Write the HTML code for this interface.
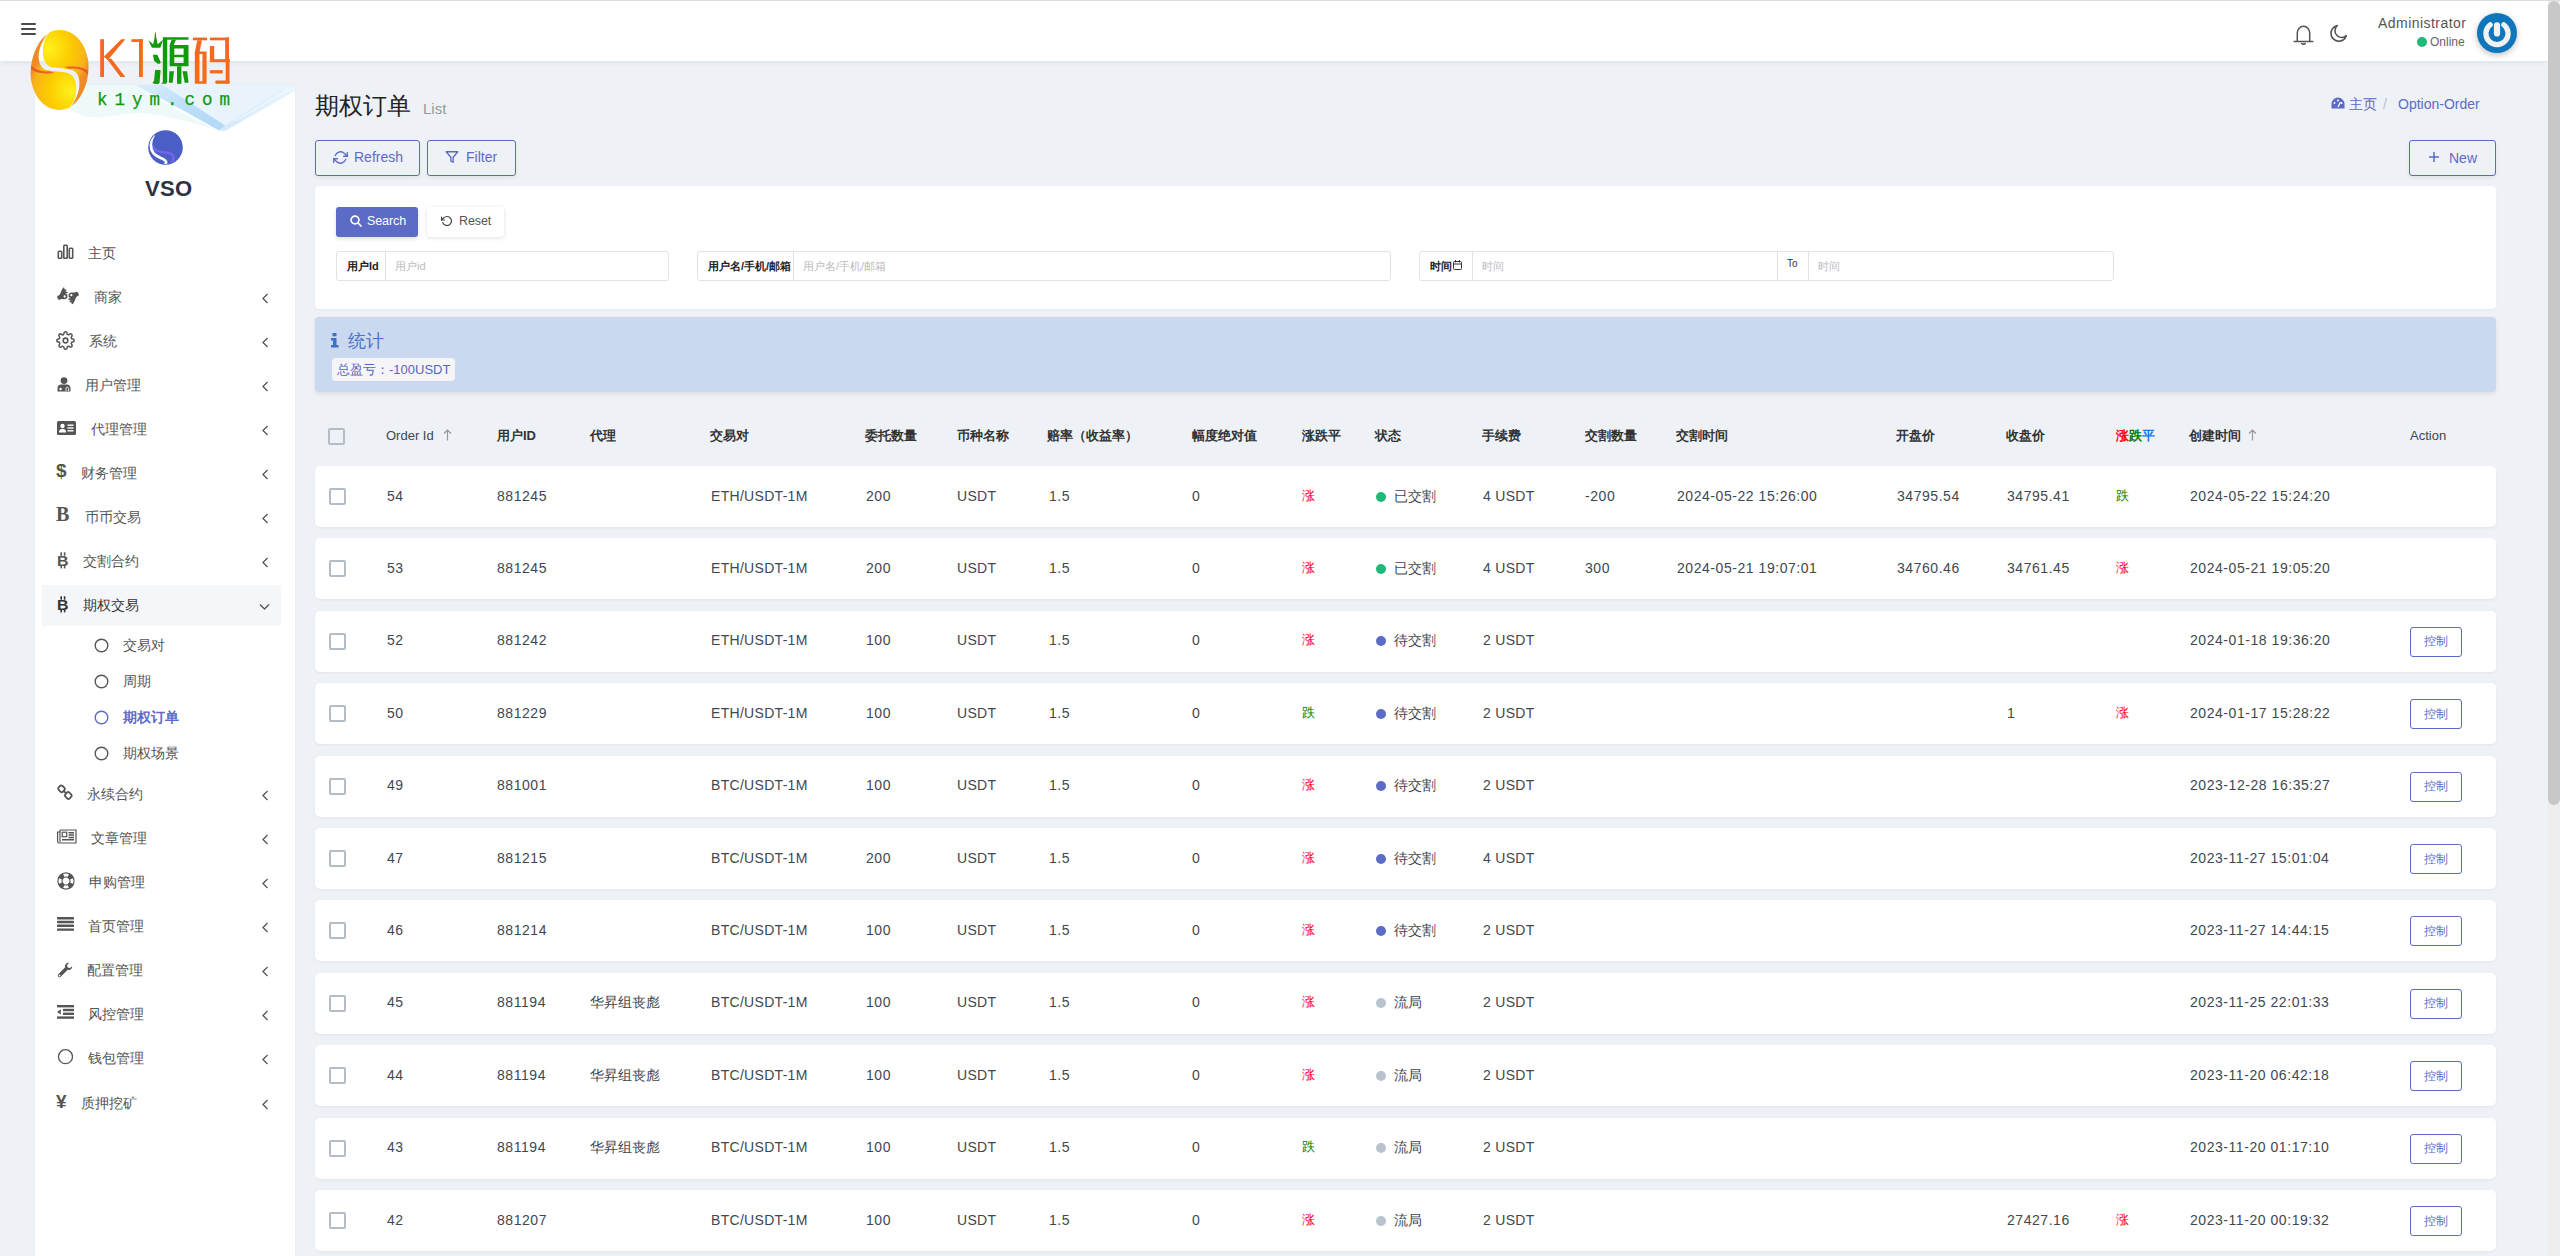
<!DOCTYPE html><html><head><meta charset="utf-8"><style>
html,body{margin:0;padding:0;}
body{width:2560px;height:1256px;overflow:hidden;position:relative;background:#eef1f6;font-family:"Liberation Sans",sans-serif;color:#414750;}
svg{display:block}
</style></head><body>
<div style="position:absolute;left:0px;top:0px;width:2548px;height:61px;background:#fff;box-shadow:0 2px 6px rgba(0,0,0,.06);"></div>
<div style="position:absolute;left:0px;top:0px;width:2560px;height:1px;background:#dcdedc;"></div>
<div style="position:absolute;left:21px;top:23px;width:14.5px;height:2px;background:#4a4a4a;border-radius:1px;"></div>
<div style="position:absolute;left:21px;top:28px;width:14.5px;height:2px;background:#4a4a4a;border-radius:1px;"></div>
<div style="position:absolute;left:21px;top:33px;width:14.5px;height:2px;background:#4a4a4a;border-radius:1px;"></div>
<svg style="position:absolute;left:2293px;top:23px" width="21" height="22" viewBox="0 0 21 22" fill="none" stroke="#555" stroke-width="1.5" stroke-linecap="round" stroke-linejoin="round"><path d="M4.3 18.3 V10 A6.2 6.7 0 0 1 16.7 10 V18.3"/><path d="M1.2 18.5 H19.8"/><path d="M8.8 20.5 L10.5 21.5 L12.2 20.5"/></svg>
<svg style="position:absolute;left:2328px;top:23px" width="21" height="21" viewBox="0 0 24 24" fill="none" stroke="#555" stroke-width="1.8" stroke-linecap="round" stroke-linejoin="round"><path d="M21 14.5A9 9 0 1 1 10.5 3a7 7 0 0 0 10.5 11.5z"/></svg>
<div style="position:absolute;left:2378px;top:3.00px;height:40px;line-height:40px;font-size:14px;color:#555;font-weight:normal;letter-spacing:0.45px;white-space:nowrap;">Administrator</div>
<div style="position:absolute;left:2417px;top:36.5px;width:10px;height:10px;background:#21b978;border-radius:50%;"></div>
<div style="position:absolute;left:2430px;top:21.50px;height:40px;line-height:40px;font-size:12px;color:#666;font-weight:normal;letter-spacing:0px;white-space:nowrap;">Online</div>
<div style="position:absolute;left:2477px;top:12.5px;width:40px;height:40px;border-radius:50%;background:#0f76bc;box-shadow:0 2px 6px rgba(0,0,0,.25);"></div>
<svg style="position:absolute;left:2477px;top:12.5px" width="40" height="40" viewBox="0 0 40 40"><path d="M13.2 11.8 A11.1 11.1 0 1 0 26.8 11.8" fill="none" stroke="#f2f2f2" stroke-width="5.2" stroke-linecap="round"/><path d="M20 12.3 V20.5" stroke="#f2f2f2" stroke-width="6.2" stroke-linecap="round"/></svg>
<div style="position:absolute;left:2548px;top:1px;width:12px;height:1255px;background:#eeeeee;"></div>
<div style="position:absolute;left:2548px;top:1px;width:12px;height:804px;background:#c8c8c8;border-radius:6px;"></div>
<div style="position:absolute;left:35px;top:85px;width:260px;height:1171px;background:#fff;box-shadow:0 0 3px rgba(0,0,0,.04);"></div>
<svg style="position:absolute;left:147px;top:129px" width="37" height="37" viewBox="0 0 37 37">
<defs><clipPath id="vc"><circle cx="18.5" cy="18.5" r="16.4"/></clipPath></defs><circle cx="18.5" cy="18.5" r="17.3" fill="#4b5ec5"/><g clip-path="url(#vc)">
<path d="M5.6 17.5 C7.5 21.5 11 22.8 17 23.2 C23 23.6 26.8 25.5 26.6 29 C26.5 31 25.6 32.5 24.6 33.6" fill="none" stroke="#7565ee" stroke-width="2.6" stroke-linecap="round"/>
<path d="M6.4 6.8 C3.2 11.5 2.8 19 6.2 23.8 C9.2 28 14 28.7 17 30.6 C19.4 32.1 19.6 34 18.2 35.6" fill="none" stroke="#fff" stroke-width="2.8" stroke-linecap="round"/></g>
</svg>
<div style="position:absolute;left:145px;top:169.00px;height:40px;line-height:40px;font-size:22px;color:#2b3240;font-weight:bold;letter-spacing:0.3px;white-space:nowrap;">VSO</div>
<svg style="position:absolute;left:57px;top:244px" width="17" height="16" viewBox="0 0 17 16" fill="none" stroke="#555" stroke-width="1.6"><rect x="1.3" y="7.3" width="3.4" height="7" rx=".8"/><rect x="6.8" y="1.3" width="3.4" height="13" rx=".8"/><rect x="12.3" y="4.3" width="3.4" height="10" rx=".8"/></svg>
<div style="position:absolute;left:88px;top:233.00px;height:40px;line-height:40px;font-size:14px;color:#555;font-weight:normal;letter-spacing:0px;white-space:nowrap;">主页</div>
<svg style="position:absolute;left:54px;top:284px" width="28" height="24" viewBox="0 0 1465 1256"><path fill="#555" fill-rule="evenodd" d="M170 640 L300 560 L400 330 L480 180 L550 200 L540 270 L640 290 L660 340 L580 380 L700 420 L720 470 L600 500 L700 560 L700 720 L620 780 L520 800 L380 790 L300 830 L220 810 L170 700z M500 655 a60 60 0 1 0 120 0 a60 60 0 1 0 -120 0z M1296 600 L1166 680 L1066 910 L986 1060 L916 1040 L926 970 L826 950 L806 900 L886 860 L766 820 L746 770 L866 740 L766 680 L766 520 L846 460 L946 440 L1086 450 L1166 410 L1246 430 L1296 540z M846 585 a60 60 0 1 0 120 0 a60 60 0 1 0 -120 0z"/></svg>
<div style="position:absolute;left:94px;top:277.00px;height:40px;line-height:40px;font-size:14px;color:#555;font-weight:normal;letter-spacing:0px;white-space:nowrap;">商家</div>
<svg style="position:absolute;left:261px;top:293px" width="8" height="11" viewBox="0 0 8 11" fill="none" stroke="#555" stroke-width="1.3"><path d="M6.5 1 L2 5.5 L6.5 10"/></svg>
<svg style="position:absolute;left:56px;top:330.5px" width="19" height="19" viewBox="0 0 24 24" fill="none" stroke="#555" stroke-width="1.9" stroke-linejoin="round"><circle cx="12" cy="12" r="3"/><path d="M19.4 15a1.65 1.65 0 0 0 .33 1.82l.06.06a2 2 0 1 1-2.83 2.83l-.06-.06a1.65 1.65 0 0 0-1.82-.33 1.65 1.65 0 0 0-1 1.51V21a2 2 0 1 1-4 0v-.09A1.65 1.65 0 0 0 9 19.4a1.65 1.65 0 0 0-1.82.33l-.06.06a2 2 0 1 1-2.83-2.83l.06-.06A1.65 1.65 0 0 0 4.68 15a1.65 1.65 0 0 0-1.51-1H3a2 2 0 1 1 0-4h.09A1.65 1.65 0 0 0 4.6 9a1.65 1.65 0 0 0-.33-1.82l-.06-.06a2 2 0 1 1 2.83-2.83l.06.06A1.65 1.65 0 0 0 9 4.68a1.65 1.65 0 0 0 1-1.51V3a2 2 0 1 1 4 0v.09a1.65 1.65 0 0 0 1 1.51 1.65 1.65 0 0 0 1.82-.33l.06-.06a2 2 0 1 1 2.83 2.83l-.06.06A1.65 1.65 0 0 0 19.4 9a1.65 1.65 0 0 0 1.51 1H21a2 2 0 1 1 0 4h-.09a1.65 1.65 0 0 0-1.51 1z"/></svg>
<div style="position:absolute;left:89px;top:321.00px;height:40px;line-height:40px;font-size:14px;color:#555;font-weight:normal;letter-spacing:0px;white-space:nowrap;">系统</div>
<svg style="position:absolute;left:261px;top:337px" width="8" height="11" viewBox="0 0 8 11" fill="none" stroke="#555" stroke-width="1.3"><path d="M6.5 1 L2 5.5 L6.5 10"/></svg>
<svg style="position:absolute;left:57px;top:376.5px" width="14" height="15" viewBox="0 0 14 15"><circle cx="7" cy="3.6" r="3.4" fill="#555"/><path d="M0.5 14.5 V11 C0.5 8.5 2.5 7.5 4 7.5 L10 7.5 C11.5 7.5 13.5 8.5 13.5 11 V14.5z" fill="#555"/><circle cx="3.6" cy="12" r="1.2" fill="#fff"/><path d="M9 14 v-2.5 a1.3 1.3 0 0 1 2.6 0 v2.5" fill="none" stroke="#fff" stroke-width=".9"/></svg>
<div style="position:absolute;left:85px;top:365.00px;height:40px;line-height:40px;font-size:14px;color:#555;font-weight:normal;letter-spacing:0px;white-space:nowrap;">用户管理</div>
<svg style="position:absolute;left:261px;top:381px" width="8" height="11" viewBox="0 0 8 11" fill="none" stroke="#555" stroke-width="1.3"><path d="M6.5 1 L2 5.5 L6.5 10"/></svg>
<svg style="position:absolute;left:57px;top:420.5px" width="19" height="14" viewBox="0 0 19 14"><rect x="0" y="0" width="19" height="14" rx="1.5" fill="#555"/><circle cx="5.5" cy="5" r="2.2" fill="#fff"/><path d="M2 11.5 C2 8.5 3.5 8 5.5 8 C7.5 8 9 8.5 9 11.5z" fill="#fff"/><rect x="10.5" y="3.5" width="6" height="1.4" fill="#fff"/><rect x="10.5" y="6.3" width="6" height="1.4" fill="#fff"/><rect x="10.5" y="9.1" width="6" height="1.4" fill="#fff"/></svg>
<div style="position:absolute;left:91px;top:409.00px;height:40px;line-height:40px;font-size:14px;color:#555;font-weight:normal;letter-spacing:0px;white-space:nowrap;">代理管理</div>
<svg style="position:absolute;left:261px;top:425px" width="8" height="11" viewBox="0 0 8 11" fill="none" stroke="#555" stroke-width="1.3"><path d="M6.5 1 L2 5.5 L6.5 10"/></svg>
<div style="position:absolute;left:56px;top:460px;height:22px;line-height:22px;font-size:19px;font-weight:bold;color:#555;">$</div>
<div style="position:absolute;left:81px;top:453.00px;height:40px;line-height:40px;font-size:14px;color:#555;font-weight:normal;letter-spacing:0px;white-space:nowrap;">财务管理</div>
<svg style="position:absolute;left:261px;top:469px" width="8" height="11" viewBox="0 0 8 11" fill="none" stroke="#555" stroke-width="1.3"><path d="M6.5 1 L2 5.5 L6.5 10"/></svg>
<div style="position:absolute;left:56px;top:503px;height:22px;line-height:22px;font-family:'Liberation Serif',serif;font-weight:bold;font-size:20px;color:#555;">B</div>
<div style="position:absolute;left:85px;top:497.00px;height:40px;line-height:40px;font-size:14px;color:#555;font-weight:normal;letter-spacing:0px;white-space:nowrap;">币币交易</div>
<svg style="position:absolute;left:261px;top:513px" width="8" height="11" viewBox="0 0 8 11" fill="none" stroke="#555" stroke-width="1.3"><path d="M6.5 1 L2 5.5 L6.5 10"/></svg>
<svg style="position:absolute;left:57px;top:552px" width="13" height="17" viewBox="0 0 13 17"><text x="0" y="13.9" font-family="Liberation Sans" font-weight="bold" font-size="15" fill="#555" textLength="11.5" lengthAdjust="spacingAndGlyphs">B</text><rect x="3.4" y="0.3" width="1.6" height="3.4" fill="#555"/><rect x="6.8" y="0.3" width="1.6" height="3.4" fill="#555"/><rect x="3.4" y="13" width="1.6" height="3.4" fill="#555"/><rect x="6.8" y="13" width="1.6" height="3.4" fill="#555"/></svg>
<div style="position:absolute;left:83px;top:541.00px;height:40px;line-height:40px;font-size:14px;color:#555;font-weight:normal;letter-spacing:0px;white-space:nowrap;">交割合约</div>
<svg style="position:absolute;left:261px;top:557px" width="8" height="11" viewBox="0 0 8 11" fill="none" stroke="#555" stroke-width="1.3"><path d="M6.5 1 L2 5.5 L6.5 10"/></svg>
<div style="position:absolute;left:42px;top:585px;width:239px;height:41px;background:#f5f6f9;border-radius:1px;"></div>
<svg style="position:absolute;left:57px;top:596px" width="13" height="17" viewBox="0 0 13 17"><text x="0" y="13.9" font-family="Liberation Sans" font-weight="bold" font-size="15" fill="#333" textLength="11.5" lengthAdjust="spacingAndGlyphs">B</text><rect x="3.4" y="0.3" width="1.6" height="3.4" fill="#333"/><rect x="6.8" y="0.3" width="1.6" height="3.4" fill="#333"/><rect x="3.4" y="13" width="1.6" height="3.4" fill="#333"/><rect x="6.8" y="13" width="1.6" height="3.4" fill="#333"/></svg>
<div style="position:absolute;left:83px;top:585.00px;height:40px;line-height:40px;font-size:14px;color:#333;font-weight:normal;letter-spacing:0px;white-space:nowrap;">期权交易</div>
<svg style="position:absolute;left:259px;top:603px" width="11" height="8" viewBox="0 0 11 8" fill="none" stroke="#555" stroke-width="1.3"><path d="M1 1.5 L5.5 6 L10 1.5"/></svg>
<svg style="position:absolute;left:56px;top:783px" width="18" height="18" viewBox="0 0 18 18" fill="none" stroke="#555" stroke-width="1.8"><rect x="2.5" y="3.05" width="6" height="5.5" rx="1.8" transform="rotate(45 5.5 5.8)"/><rect x="9.3" y="9.75" width="6" height="5.5" rx="1.8" transform="rotate(45 12.3 12.5)"/><path d="M7.3 7.6 L10.5 10.7"/></svg>
<div style="position:absolute;left:87px;top:774.00px;height:40px;line-height:40px;font-size:14px;color:#555;font-weight:normal;letter-spacing:0px;white-space:nowrap;">永续合约</div>
<svg style="position:absolute;left:261px;top:790px" width="8" height="11" viewBox="0 0 8 11" fill="none" stroke="#555" stroke-width="1.3"><path d="M6.5 1 L2 5.5 L6.5 10"/></svg>
<svg style="position:absolute;left:57px;top:829px" width="20" height="15" viewBox="0 0 20 15" fill="none" stroke="#555" stroke-width="1.2"><path d="M3 1 H19 V14 H2 C1.2 14 0.6 13.4 0.6 12.6 V3 H3"/><path d="M3 1 V13"/><rect x="5.2" y="3.2" width="4.5" height="4.5"/><path d="M11.5 3.8h5.5M11.5 6h5.5M11.5 8.5h5.5M5 10.8h12" stroke-width="1.4"/></svg>
<div style="position:absolute;left:91px;top:818.00px;height:40px;line-height:40px;font-size:14px;color:#555;font-weight:normal;letter-spacing:0px;white-space:nowrap;">文章管理</div>
<svg style="position:absolute;left:261px;top:834px" width="8" height="11" viewBox="0 0 8 11" fill="none" stroke="#555" stroke-width="1.3"><path d="M6.5 1 L2 5.5 L6.5 10"/></svg>
<svg style="position:absolute;left:56.6px;top:871.8px" width="18" height="18" viewBox="0 0 18 18"><circle cx="9" cy="9" r="8.1" fill="none" stroke="#555" stroke-width="1.1"/><circle cx="9" cy="9" r="4.0" fill="none" stroke="#555" stroke-width="1.1"/><path fill="#555" d="M17.07 12.26 A8.7 8.7 0 0 1 12.26 17.07 L10.35 12.34 A3.6 3.6 0 0 0 12.34 10.35z M5.74 17.07 A8.7 8.7 0 0 1 0.93 12.26 L5.66 10.35 A3.6 3.6 0 0 0 7.65 12.34z M0.93 5.74 A8.7 8.7 0 0 1 5.74 0.93 L7.65 5.66 A3.6 3.6 0 0 0 5.66 7.65z M12.26 0.93 A8.7 8.7 0 0 1 17.07 5.74 L12.34 7.65 A3.6 3.6 0 0 0 10.35 5.66z"/></svg>
<div style="position:absolute;left:89px;top:862.00px;height:40px;line-height:40px;font-size:14px;color:#555;font-weight:normal;letter-spacing:0px;white-space:nowrap;">申购管理</div>
<svg style="position:absolute;left:261px;top:878px" width="8" height="11" viewBox="0 0 8 11" fill="none" stroke="#555" stroke-width="1.3"><path d="M6.5 1 L2 5.5 L6.5 10"/></svg>
<svg style="position:absolute;left:57px;top:917.4px" width="17" height="14" viewBox="0 0 17 14" fill="#555"><rect x="0" y="0" width="17" height="2.4" rx=".6"/><rect x="0" y="3.8" width="17" height="2.4" rx=".6"/><rect x="0" y="7.6" width="17" height="2.4" rx=".6"/><rect x="0" y="11.4" width="17" height="2.4" rx=".6"/></svg>
<div style="position:absolute;left:88px;top:906.00px;height:40px;line-height:40px;font-size:14px;color:#555;font-weight:normal;letter-spacing:0px;white-space:nowrap;">首页管理</div>
<svg style="position:absolute;left:261px;top:922px" width="8" height="11" viewBox="0 0 8 11" fill="none" stroke="#555" stroke-width="1.3"><path d="M6.5 1 L2 5.5 L6.5 10"/></svg>
<svg style="position:absolute;left:57px;top:962px" width="16" height="16" viewBox="0 0 16 16"><path d="M11.5 0.8 C9 0.8 7.5 3 8.2 5.3 L1.2 12.3 C0.4 13.1 0.6 14.2 1.3 14.8 C2 15.5 3 15.5 3.7 14.8 L10.7 7.8 C13 8.5 15.3 7 15.2 4.3 L13 6.1 L10.6 5.4 L10 3 L12 0.9z" fill="#555"/><circle cx="2.5" cy="13.5" r=".9" fill="#fff"/></svg>
<div style="position:absolute;left:87px;top:950.00px;height:40px;line-height:40px;font-size:14px;color:#555;font-weight:normal;letter-spacing:0px;white-space:nowrap;">配置管理</div>
<svg style="position:absolute;left:261px;top:966px" width="8" height="11" viewBox="0 0 8 11" fill="none" stroke="#555" stroke-width="1.3"><path d="M6.5 1 L2 5.5 L6.5 10"/></svg>
<svg style="position:absolute;left:57px;top:1005.4px" width="17" height="14" viewBox="0 0 17 14" fill="#555"><rect x="0" y="0" width="17" height="2.4"/><rect x="6" y="3.8" width="11" height="2.4"/><rect x="6" y="7.6" width="11" height="2.4"/><rect x="0" y="11.4" width="17" height="2.4"/><path d="M0 6.9 L3.8 4.2 V9.6z"/></svg>
<div style="position:absolute;left:88px;top:994.00px;height:40px;line-height:40px;font-size:14px;color:#555;font-weight:normal;letter-spacing:0px;white-space:nowrap;">风控管理</div>
<svg style="position:absolute;left:261px;top:1010px" width="8" height="11" viewBox="0 0 8 11" fill="none" stroke="#555" stroke-width="1.3"><path d="M6.5 1 L2 5.5 L6.5 10"/></svg>
<svg style="position:absolute;left:57px;top:1049px" width="16" height="16" viewBox="0 0 16 16"><circle cx="8.5" cy="7.7" r="7" fill="none" stroke="#555" stroke-width="1.3"/></svg>
<div style="position:absolute;left:88px;top:1038.00px;height:40px;line-height:40px;font-size:14px;color:#555;font-weight:normal;letter-spacing:0px;white-space:nowrap;">钱包管理</div>
<svg style="position:absolute;left:261px;top:1054px" width="8" height="11" viewBox="0 0 8 11" fill="none" stroke="#555" stroke-width="1.3"><path d="M6.5 1 L2 5.5 L6.5 10"/></svg>
<div style="position:absolute;left:56px;top:1090.5px;height:22px;line-height:22px;font-size:19px;font-weight:bold;color:#555;">¥</div>
<div style="position:absolute;left:81px;top:1083.00px;height:40px;line-height:40px;font-size:14px;color:#555;font-weight:normal;letter-spacing:0px;white-space:nowrap;">质押挖矿</div>
<svg style="position:absolute;left:261px;top:1099px" width="8" height="11" viewBox="0 0 8 11" fill="none" stroke="#555" stroke-width="1.3"><path d="M6.5 1 L2 5.5 L6.5 10"/></svg>
<svg style="position:absolute;left:94px;top:637.5px" width="15" height="15" viewBox="0 0 15 15"><circle cx="7.5" cy="7.5" r="6.3" fill="none" stroke="#555" stroke-width="1.4"/></svg>
<div style="position:absolute;left:123px;top:625.00px;height:40px;line-height:40px;font-size:14px;color:#555;font-weight:normal;letter-spacing:0px;white-space:nowrap;">交易对</div>
<svg style="position:absolute;left:94px;top:673.5px" width="15" height="15" viewBox="0 0 15 15"><circle cx="7.5" cy="7.5" r="6.3" fill="none" stroke="#555" stroke-width="1.4"/></svg>
<div style="position:absolute;left:123px;top:661.00px;height:40px;line-height:40px;font-size:14px;color:#555;font-weight:normal;letter-spacing:0px;white-space:nowrap;">周期</div>
<svg style="position:absolute;left:94px;top:709.5px" width="15" height="15" viewBox="0 0 15 15"><circle cx="7.5" cy="7.5" r="6.3" fill="none" stroke="#5c6bc6" stroke-width="1.4"/></svg>
<div style="position:absolute;left:123px;top:697.00px;height:40px;line-height:40px;font-size:14px;color:#5c6bc6;font-weight:bold;letter-spacing:0px;white-space:nowrap;">期权订单</div>
<svg style="position:absolute;left:94px;top:745.5px" width="15" height="15" viewBox="0 0 15 15"><circle cx="7.5" cy="7.5" r="6.3" fill="none" stroke="#555" stroke-width="1.4"/></svg>
<div style="position:absolute;left:123px;top:733.00px;height:40px;line-height:40px;font-size:14px;color:#555;font-weight:normal;letter-spacing:0px;white-space:nowrap;">期权场景</div>
<svg style="position:absolute;left:35px;top:85px" width="260" height="50" viewBox="0 0 260 50">
<defs><filter id="bl" x="-10%" y="-10%" width="120%" height="120%"><feGaussianBlur stdDeviation="0.7"/></filter>
<linearGradient id="wl" x1="0" y1="0" x2="1" y2="0.6"><stop offset="0" stop-color="#d6ebfb"/><stop offset="0.55" stop-color="#b3dbf8"/><stop offset="1" stop-color="#a6d3f6"/></linearGradient>
<linearGradient id="wr" x1="0" y1="1" x2="1" y2="0"><stop offset="0" stop-color="#cfe6fa"/><stop offset="1" stop-color="#e9f5fd"/></linearGradient></defs>
<g filter="url(#bl)">
<path d="M30 0 H102 C130 18 160 36 183 45 C150 36 125 28 100 28 C80 30 65 34 55 32 C45 30 35 26 30 20z" fill="#e8f7f8" opacity="0.75"/>
<path d="M128 0 H255 L191 41z" fill="#e5f2fc" opacity="0.9"/>
<path d="M100 0 H128 L191 41 L184 45.5 C160 32 128 14 100 0z" fill="url(#wl)" opacity="0.85"/>
<path d="M183 45.5 L190 46 L260 6 V0 H252z" fill="url(#wr)" opacity="0.9"/>
<path d="M200 36 C225 22 240 12 258 3" stroke="#ffffff" stroke-width="0.8" fill="none" opacity="0.8"/>
</g>
</svg>
<svg style="position:absolute;left:25px;top:25px" width="70" height="90" viewBox="0 0 977 1256">
<defs>
<radialGradient id="ga" cx="330" cy="330" r="620" gradientUnits="userSpaceOnUse"><stop offset="0" stop-color="#fff21c"/><stop offset="0.5" stop-color="#fccc00"/><stop offset="0.85" stop-color="#f7b21c"/><stop offset="1" stop-color="#f08a24"/></radialGradient>
<radialGradient id="gb" cx="640" cy="920" r="620" gradientUnits="userSpaceOnUse"><stop offset="0" stop-color="#fff21c"/><stop offset="0.5" stop-color="#fccc00"/><stop offset="0.85" stop-color="#f7b21c"/><stop offset="1" stop-color="#f08a24"/></radialGradient>
</defs>
<path d="M340 104 C400 75 460 68 520 72 C700 90 840 250 880 480 C900 620 880 800 800 950 C760 1030 710 1090 650 1130 C720 1030 765 910 760 800 C755 700 715 640 640 625 C560 610 470 600 380 590 C300 570 255 500 250 400 C245 290 270 180 340 104z" fill="url(#ga)"/>
<path d="M626 1152 C566 1181 506 1188 446 1184 C266 1166 126 1006 86 776 C66 636 86 456 166 306 C206 226 256 166 316 126 C236 226 186 346 191 456 C196 556 246 621 326 636 C406 646 496 656 586 666 C666 686 711 756 716 856 C721 966 696 1076 626 1152z" fill="url(#gb)"/>
<path d="M560 585 C680 570 820 585 875 640 L880 690 C820 620 700 600 620 612z" fill="#e6412a" opacity="0.75"/>
<path d="M406 671 C286 686 146 671 91 616 L86 566 C146 636 266 656 346 644z" fill="#e6412a" opacity="0.75"/>
</svg>
<svg style="position:absolute;left:95px;top:28px" width="140" height="60" viewBox="0 0 2560 1097">
<g fill="#f36a1f">
<rect x="95" y="205" width="70" height="690"/>
<path d="M160 525 L480 205 L555 205 L235 585z"/>
<path d="M215 560 L300 560 L555 895 L465 895z"/>
<rect x="665" y="205" width="210" height="50"/>
<rect x="805" y="205" width="70" height="690"/>
<rect x="1790" y="175" width="260" height="50"/>
<path d="M1870 225 L1955 225 L1912 440 L1826 440z"/>
<path d="M1825 430 H2040 V1020 H1825z M1910 475 V975 H1965 V475z" fill-rule="evenodd"/>
<rect x="2100" y="175" width="350" height="50"/>
<rect x="2380" y="175" width="70" height="420"/>
<rect x="2100" y="330" width="80" height="260"/>
<rect x="2100" y="570" width="365" height="55"/>
<rect x="2390" y="570" width="70" height="440"/>
<rect x="2200" y="960" width="260" height="60" rx="20"/>
<rect x="2100" y="770" width="235" height="60"/>
</g>
<g fill="#129a0e">
<path d="M975 225 L1065 295 L1090 170 L1098 80 L1112 80 L1120 170 L1145 295 L1245 215 L1195 360 L1040 360z"/>
<path d="M1060 490 L1140 490 L1200 620 C1200 660 1160 660 1140 650 L1080 600z"/>
<path d="M1100 770 L1200 770 L1180 1000 C1180 1030 1100 1030 1050 1010 L1080 960z"/>
<path d="M1240 170 H1710 V215 H1320 V990 L1300 1020 H1210 L1240 990z"/>
<path d="M1365 310 H1710 V700 H1365z M1450 375 V490 H1620 V375z M1450 535 V640 H1620 V535z" fill-rule="evenodd"/>
<path d="M1400 215 L1480 215 L1440 310 L1365 310z"/>
<rect x="1500" y="700" width="80" height="320"/>
<path d="M1360 790 H1445 L1420 1000 H1350z"/>
<path d="M1600 790 H1685 L1710 1000 H1640z"/>
</g>
</svg>
<svg style="position:absolute;left:97px;top:88px" width="140" height="24" viewBox="0 0 140 24">
<text x="0" y="16.8" font-family="Liberation Mono" font-size="17.5" fill="#129a0e" stroke="#129a0e" stroke-width="0.25" letter-spacing="7.0">k1ym.com</text>
</svg>
<div style="position:absolute;left:315px;top:85.50px;height:40px;line-height:40px;font-size:24px;color:#222;font-weight:normal;letter-spacing:0px;white-space:nowrap;">期权订单</div>
<div style="position:absolute;left:423px;top:89.00px;height:40px;line-height:40px;font-size:15px;color:#999;font-weight:normal;letter-spacing:0px;white-space:nowrap;">List</div>
<svg style="position:absolute;left:2331px;top:97px" width="14" height="12" viewBox="0 0 14 12"><path d="M7 0.5 A6.5 6.5 0 0 0 0.5 7 V11.5 H13.5 V7 A6.5 6.5 0 0 0 7 0.5z" fill="#5c6bc6"/><circle cx="3.5" cy="6" r="1" fill="#fff"/><circle cx="7" cy="3.5" r="1" fill="#fff"/><circle cx="10.5" cy="6" r="1" fill="#fff"/><path d="M7 10 L9.5 5" stroke="#fff" stroke-width="1.3"/></svg>
<div style="position:absolute;left:2349px;top:83.50px;height:40px;line-height:40px;font-size:14px;color:#5c6bc6;font-weight:normal;letter-spacing:0px;white-space:nowrap;">主页</div>
<div style="position:absolute;left:2383px;top:83.50px;height:40px;line-height:40px;font-size:14px;color:#b7c0cc;font-weight:normal;letter-spacing:0px;white-space:nowrap;">/</div>
<div style="position:absolute;left:2398px;top:83.50px;height:40px;line-height:40px;font-size:14px;color:#5c6bc6;font-weight:normal;letter-spacing:0px;white-space:nowrap;">Option-Order</div>
<div style="position:absolute;left:315px;top:140px;width:105px;height:36px;box-sizing:border-box;border:1px solid #5c6bc6;border-radius:3px;box-shadow:0 2px 4px rgba(0,0,0,.06);"></div>
<svg style="position:absolute;left:333px;top:149.5px" width="15" height="15" viewBox="0 0 24 24" fill="none" stroke="#5c6bc6" stroke-width="2.2" stroke-linecap="round" stroke-linejoin="round"><path d="M23 4v6h-6"/><path d="M1 20v-6h6"/><path d="M3.5 9a9 9 0 0 1 14.9-3.4L23 10M1 14l4.6 4.4A9 9 0 0 0 20.5 15"/></svg>
<div style="position:absolute;left:354px;top:137.00px;height:40px;line-height:40px;font-size:14px;color:#5c6bc6;font-weight:normal;letter-spacing:0px;white-space:nowrap;">Refresh</div>
<div style="position:absolute;left:427px;top:140px;width:89px;height:36px;box-sizing:border-box;border:1px solid #5c6bc6;border-radius:3px;box-shadow:0 2px 4px rgba(0,0,0,.06);"></div>
<svg style="position:absolute;left:445px;top:150px" width="14" height="14" viewBox="0 0 24 24" fill="none" stroke="#5c6bc6" stroke-width="2.3" stroke-linejoin="round"><path d="M22 3H2l8 9.5V19l4 2v-8.5z"/></svg>
<div style="position:absolute;left:466px;top:137.00px;height:40px;line-height:40px;font-size:14px;color:#5c6bc6;font-weight:normal;letter-spacing:0px;white-space:nowrap;">Filter</div>
<div style="position:absolute;left:2409px;top:140px;width:87px;height:36px;box-sizing:border-box;border:1px solid #5c6bc6;border-radius:3px;box-shadow:0 2px 4px rgba(0,0,0,.06);"></div>
<svg style="position:absolute;left:2429px;top:152px" width="10" height="10" viewBox="0 0 10 10" stroke="#5c6bc6" stroke-width="1.5"><path d="M5 0v10M0 5h10"/></svg>
<div style="position:absolute;left:2449px;top:137.50px;height:40px;line-height:40px;font-size:14px;color:#5c6bc6;font-weight:normal;letter-spacing:0px;white-space:nowrap;">New</div>
<div style="position:absolute;left:315px;top:186px;width:2181px;height:123px;background:#fff;border-radius:4px;box-shadow:0 1px 3px rgba(0,0,0,.03);"></div>
<div style="position:absolute;left:336px;top:207px;width:82px;height:30px;background:#5c6bc6;border-radius:3px;box-shadow:0 2px 4px rgba(0,0,0,.12);"></div>
<svg style="position:absolute;left:350px;top:215px" width="12" height="12" viewBox="0 0 12 12" fill="none" stroke="#fff" stroke-width="1.7"><circle cx="5" cy="5" r="3.9"/><path d="M8 8 L11 11" stroke-linecap="round"/></svg>
<div style="position:absolute;left:367px;top:201.00px;height:40px;line-height:40px;font-size:12.5px;color:#fff;font-weight:normal;letter-spacing:-0.1px;white-space:nowrap;">Search</div>
<div style="position:absolute;left:427px;top:207px;width:77px;height:30px;background:#fff;border-radius:3px;box-shadow:0 1px 4px rgba(0,0,0,.13);"></div>
<svg style="position:absolute;left:441px;top:215px" width="12" height="12" viewBox="0 0 24 24" fill="none" stroke="#444" stroke-width="2.4" stroke-linecap="round"><path d="M1 4v6h6"/><path d="M3.5 15a9 9 0 1 0 2.1-9.4L1 10"/></svg>
<div style="position:absolute;left:459px;top:201.00px;height:40px;line-height:40px;font-size:12.5px;color:#555;font-weight:normal;letter-spacing:-0.1px;white-space:nowrap;">Reset</div>
<div style="position:absolute;left:336px;top:251px;width:333px;height:30px;box-sizing:border-box;border:1px solid #dde4e8;border-radius:3px;background:#fff;"></div>
<div style="position:absolute;left:385px;top:251px;width:1px;height:30px;background:#dde4e8;"></div>
<div style="position:absolute;left:347px;top:246.00px;height:40px;line-height:40px;font-size:11px;color:#222;font-weight:bold;letter-spacing:0px;white-space:nowrap;">用户Id</div>
<div style="position:absolute;left:395px;top:246.00px;height:40px;line-height:40px;font-size:11px;color:#bbb;font-weight:normal;letter-spacing:0px;white-space:nowrap;">用户id</div>
<div style="position:absolute;left:697px;top:251px;width:694px;height:30px;box-sizing:border-box;border:1px solid #dde4e8;border-radius:3px;background:#fff;"></div>
<div style="position:absolute;left:793px;top:251px;width:1px;height:30px;background:#dde4e8;"></div>
<div style="position:absolute;left:708px;top:246.00px;height:40px;line-height:40px;font-size:11px;color:#222;font-weight:bold;letter-spacing:0px;white-space:nowrap;">用户名/手机/邮箱</div>
<div style="position:absolute;left:803px;top:246.00px;height:40px;line-height:40px;font-size:11px;color:#bbb;font-weight:normal;letter-spacing:0px;white-space:nowrap;">用户名/手机/邮箱</div>
<div style="position:absolute;left:1419px;top:251px;width:695px;height:30px;box-sizing:border-box;border:1px solid #dde4e8;border-radius:3px;background:#fff;"></div>
<div style="position:absolute;left:1472px;top:251px;width:1px;height:30px;background:#dde4e8;"></div>
<div style="position:absolute;left:1777px;top:251px;width:1px;height:30px;background:#dde4e8;"></div>
<div style="position:absolute;left:1808px;top:251px;width:1px;height:30px;background:#dde4e8;"></div>
<div style="position:absolute;left:1430px;top:246.00px;height:40px;line-height:40px;font-size:11px;color:#222;font-weight:bold;letter-spacing:0px;white-space:nowrap;">时间</div>
<svg style="position:absolute;left:1453px;top:260px" width="9" height="10" viewBox="0 0 9 10" fill="none" stroke="#333" stroke-width="1"><rect x=".5" y="1.5" width="8" height="8" rx="1"/><path d="M.5 4h8M2.5 0v2.5M6.5 0v2.5"/></svg>
<div style="position:absolute;left:1482px;top:246.00px;height:40px;line-height:40px;font-size:11px;color:#bbb;font-weight:normal;letter-spacing:0px;white-space:nowrap;">时间</div>
<div style="position:absolute;left:1787px;top:244.00px;height:40px;line-height:40px;font-size:10px;color:#333;font-weight:normal;letter-spacing:0px;white-space:nowrap;">To</div>
<div style="position:absolute;left:1818px;top:246.00px;height:40px;line-height:40px;font-size:11px;color:#bbb;font-weight:normal;letter-spacing:0px;white-space:nowrap;">时间</div>
<div style="position:absolute;left:315px;top:317px;width:2181px;height:75px;background:#cad9ef;border-radius:4px;box-shadow:0 2px 4px rgba(0,0,0,.08);"></div>
<svg style="position:absolute;left:331px;top:333px" width="8" height="15" viewBox="0 0 8 15" fill="#3f70c8"><rect x="1.5" y="0" width="4" height="3.3"/><path d="M0 5 H5.5 V12 H7.5 V14.5 H0 V12 H2 V7.5 H0z"/></svg>
<div style="position:absolute;left:348px;top:320.50px;height:40px;line-height:40px;font-size:18px;color:#4a72c9;font-weight:normal;letter-spacing:0px;white-space:nowrap;">统计</div>
<div style="position:absolute;left:332px;top:358px;width:123px;height:23px;background:#f5f5f8;border-radius:4px;"></div>
<div style="position:absolute;left:337px;top:349.50px;height:40px;line-height:40px;font-size:13px;color:#5566c0;font-weight:normal;letter-spacing:0px;white-space:nowrap;">总盈亏：-100USDT</div>
<div style="position:absolute;left:328px;top:428px;width:17px;height:17px;box-sizing:border-box;border:2px solid #b3bcc7;border-radius:2px;"></div>
<div style="position:absolute;left:386px;top:415.50px;height:40px;line-height:40px;font-size:13px;color:#414750;font-weight:normal;letter-spacing:0px;white-space:nowrap;">Order Id</div>
<div style="position:absolute;left:497px;top:415.50px;height:40px;line-height:40px;font-size:13px;color:#333;font-weight:bold;letter-spacing:0px;white-space:nowrap;">用户ID</div>
<div style="position:absolute;left:590px;top:415.50px;height:40px;line-height:40px;font-size:13px;color:#333;font-weight:bold;letter-spacing:0px;white-space:nowrap;">代理</div>
<div style="position:absolute;left:710px;top:415.50px;height:40px;line-height:40px;font-size:13px;color:#333;font-weight:bold;letter-spacing:0px;white-space:nowrap;">交易对</div>
<div style="position:absolute;left:865px;top:415.50px;height:40px;line-height:40px;font-size:13px;color:#333;font-weight:bold;letter-spacing:0px;white-space:nowrap;">委托数量</div>
<div style="position:absolute;left:957px;top:415.50px;height:40px;line-height:40px;font-size:13px;color:#333;font-weight:bold;letter-spacing:0px;white-space:nowrap;">币种名称</div>
<div style="position:absolute;left:1047px;top:415.50px;height:40px;line-height:40px;font-size:13px;color:#333;font-weight:bold;letter-spacing:0px;white-space:nowrap;">赔率（收益率）</div>
<div style="position:absolute;left:1192px;top:415.50px;height:40px;line-height:40px;font-size:13px;color:#333;font-weight:bold;letter-spacing:0px;white-space:nowrap;">幅度绝对值</div>
<div style="position:absolute;left:1302px;top:415.50px;height:40px;line-height:40px;font-size:13px;color:#333;font-weight:bold;letter-spacing:0px;white-space:nowrap;">涨跌平</div>
<div style="position:absolute;left:1375px;top:415.50px;height:40px;line-height:40px;font-size:13px;color:#333;font-weight:bold;letter-spacing:0px;white-space:nowrap;">状态</div>
<div style="position:absolute;left:1482px;top:415.50px;height:40px;line-height:40px;font-size:13px;color:#333;font-weight:bold;letter-spacing:0px;white-space:nowrap;">手续费</div>
<div style="position:absolute;left:1585px;top:415.50px;height:40px;line-height:40px;font-size:13px;color:#333;font-weight:bold;letter-spacing:0px;white-space:nowrap;">交割数量</div>
<div style="position:absolute;left:1676px;top:415.50px;height:40px;line-height:40px;font-size:13px;color:#333;font-weight:bold;letter-spacing:0px;white-space:nowrap;">交割时间</div>
<div style="position:absolute;left:1896px;top:415.50px;height:40px;line-height:40px;font-size:13px;color:#333;font-weight:bold;letter-spacing:0px;white-space:nowrap;">开盘价</div>
<div style="position:absolute;left:2006px;top:415.50px;height:40px;line-height:40px;font-size:13px;color:#333;font-weight:bold;letter-spacing:0px;white-space:nowrap;">收盘价</div>
<div style="position:absolute;left:2116px;top:415.50px;height:40px;line-height:40px;font-size:13px;color:#333;font-weight:bold;letter-spacing:0px;white-space:nowrap;"><span style="color:#f00">涨</span><span style="color:#008000">跌</span><span style="color:#1e7be6">平</span></div>
<div style="position:absolute;left:2189px;top:415.50px;height:40px;line-height:40px;font-size:13px;color:#333;font-weight:bold;letter-spacing:0px;white-space:nowrap;">创建时间</div>
<div style="position:absolute;left:2410px;top:415.50px;height:40px;line-height:40px;font-size:13px;color:#414750;font-weight:normal;letter-spacing:0px;white-space:nowrap;">Action</div>
<svg style="position:absolute;left:443px;top:429px" width="9" height="12" viewBox="0 0 9 12" fill="none" stroke="#999" stroke-width="1.2"><path d="M4.5 11.5V1M1 4.5l3.5-3.5 3.5 3.5"/></svg>
<svg style="position:absolute;left:2248px;top:429px" width="9" height="12" viewBox="0 0 9 12" fill="none" stroke="#999" stroke-width="1.2"><path d="M4.5 11.5V1M1 4.5l3.5-3.5 3.5 3.5"/></svg>
<div style="position:absolute;left:315px;top:466.0px;width:2181px;height:61px;background:#fff;border-radius:5px;box-shadow:0 1px 3px rgba(0,0,0,.06);"></div>
<div style="position:absolute;left:329px;top:488.0px;width:17px;height:17px;box-sizing:border-box;border:2px solid #b3bcc7;border-radius:2px;"></div>
<div style="position:absolute;left:387px;top:475.60px;height:40px;line-height:40px;font-size:14px;color:#414750;font-weight:normal;letter-spacing:0.55px;white-space:nowrap;">54</div>
<div style="position:absolute;left:497px;top:475.60px;height:40px;line-height:40px;font-size:14px;color:#414750;font-weight:normal;letter-spacing:0.55px;white-space:nowrap;">881245</div>
<div style="position:absolute;left:711px;top:475.60px;height:40px;line-height:40px;font-size:14px;color:#414750;font-weight:normal;letter-spacing:0.3px;white-space:nowrap;">ETH/USDT-1M</div>
<div style="position:absolute;left:866px;top:475.60px;height:40px;line-height:40px;font-size:14px;color:#414750;font-weight:normal;letter-spacing:0.55px;white-space:nowrap;">200</div>
<div style="position:absolute;left:957px;top:475.60px;height:40px;line-height:40px;font-size:14px;color:#414750;font-weight:normal;letter-spacing:0.3px;white-space:nowrap;">USDT</div>
<div style="position:absolute;left:1049px;top:475.60px;height:40px;line-height:40px;font-size:14px;color:#414750;font-weight:normal;letter-spacing:0.55px;white-space:nowrap;">1.5</div>
<div style="position:absolute;left:1192px;top:475.60px;height:40px;line-height:40px;font-size:14px;color:#414750;font-weight:normal;letter-spacing:0.55px;white-space:nowrap;">0</div>
<div style="position:absolute;left:1302px;top:475.60px;height:40px;line-height:40px;font-size:13px;color:#f00;font-weight:normal;letter-spacing:0px;white-space:nowrap;">涨</div>
<div style="position:absolute;left:1376px;top:491.5px;width:10px;height:10px;background:#21b978;border-radius:50%;"></div>
<div style="position:absolute;left:1394px;top:475.60px;height:40px;line-height:40px;font-size:14px;color:#414750;font-weight:normal;letter-spacing:0px;white-space:nowrap;">已交割</div>
<div style="position:absolute;left:1483px;top:475.60px;height:40px;line-height:40px;font-size:14px;color:#414750;font-weight:normal;letter-spacing:0.3px;white-space:nowrap;">4 USDT</div>
<div style="position:absolute;left:1585px;top:475.60px;height:40px;line-height:40px;font-size:14px;color:#414750;font-weight:normal;letter-spacing:0.55px;white-space:nowrap;">-200</div>
<div style="position:absolute;left:1677px;top:475.60px;height:40px;line-height:40px;font-size:14px;color:#414750;font-weight:normal;letter-spacing:0.55px;white-space:nowrap;">2024-05-22 15:26:00</div>
<div style="position:absolute;left:1897px;top:475.60px;height:40px;line-height:40px;font-size:14px;color:#414750;font-weight:normal;letter-spacing:0.55px;white-space:nowrap;">34795.54</div>
<div style="position:absolute;left:2007px;top:475.60px;height:40px;line-height:40px;font-size:14px;color:#414750;font-weight:normal;letter-spacing:0.55px;white-space:nowrap;">34795.41</div>
<div style="position:absolute;left:2116px;top:475.60px;height:40px;line-height:40px;font-size:13px;color:#008000;font-weight:normal;letter-spacing:0px;white-space:nowrap;">跌</div>
<div style="position:absolute;left:2190px;top:475.60px;height:40px;line-height:40px;font-size:14px;color:#414750;font-weight:normal;letter-spacing:0.55px;white-space:nowrap;">2024-05-22 15:24:20</div>
<div style="position:absolute;left:315px;top:538.4px;width:2181px;height:61px;background:#fff;border-radius:5px;box-shadow:0 1px 3px rgba(0,0,0,.06);"></div>
<div style="position:absolute;left:329px;top:560.4px;width:17px;height:17px;box-sizing:border-box;border:2px solid #b3bcc7;border-radius:2px;"></div>
<div style="position:absolute;left:387px;top:548.00px;height:40px;line-height:40px;font-size:14px;color:#414750;font-weight:normal;letter-spacing:0.55px;white-space:nowrap;">53</div>
<div style="position:absolute;left:497px;top:548.00px;height:40px;line-height:40px;font-size:14px;color:#414750;font-weight:normal;letter-spacing:0.55px;white-space:nowrap;">881245</div>
<div style="position:absolute;left:711px;top:548.00px;height:40px;line-height:40px;font-size:14px;color:#414750;font-weight:normal;letter-spacing:0.3px;white-space:nowrap;">ETH/USDT-1M</div>
<div style="position:absolute;left:866px;top:548.00px;height:40px;line-height:40px;font-size:14px;color:#414750;font-weight:normal;letter-spacing:0.55px;white-space:nowrap;">200</div>
<div style="position:absolute;left:957px;top:548.00px;height:40px;line-height:40px;font-size:14px;color:#414750;font-weight:normal;letter-spacing:0.3px;white-space:nowrap;">USDT</div>
<div style="position:absolute;left:1049px;top:548.00px;height:40px;line-height:40px;font-size:14px;color:#414750;font-weight:normal;letter-spacing:0.55px;white-space:nowrap;">1.5</div>
<div style="position:absolute;left:1192px;top:548.00px;height:40px;line-height:40px;font-size:14px;color:#414750;font-weight:normal;letter-spacing:0.55px;white-space:nowrap;">0</div>
<div style="position:absolute;left:1302px;top:548.00px;height:40px;line-height:40px;font-size:13px;color:#f00;font-weight:normal;letter-spacing:0px;white-space:nowrap;">涨</div>
<div style="position:absolute;left:1376px;top:563.9px;width:10px;height:10px;background:#21b978;border-radius:50%;"></div>
<div style="position:absolute;left:1394px;top:548.00px;height:40px;line-height:40px;font-size:14px;color:#414750;font-weight:normal;letter-spacing:0px;white-space:nowrap;">已交割</div>
<div style="position:absolute;left:1483px;top:548.00px;height:40px;line-height:40px;font-size:14px;color:#414750;font-weight:normal;letter-spacing:0.3px;white-space:nowrap;">4 USDT</div>
<div style="position:absolute;left:1585px;top:548.00px;height:40px;line-height:40px;font-size:14px;color:#414750;font-weight:normal;letter-spacing:0.55px;white-space:nowrap;">300</div>
<div style="position:absolute;left:1677px;top:548.00px;height:40px;line-height:40px;font-size:14px;color:#414750;font-weight:normal;letter-spacing:0.55px;white-space:nowrap;">2024-05-21 19:07:01</div>
<div style="position:absolute;left:1897px;top:548.00px;height:40px;line-height:40px;font-size:14px;color:#414750;font-weight:normal;letter-spacing:0.55px;white-space:nowrap;">34760.46</div>
<div style="position:absolute;left:2007px;top:548.00px;height:40px;line-height:40px;font-size:14px;color:#414750;font-weight:normal;letter-spacing:0.55px;white-space:nowrap;">34761.45</div>
<div style="position:absolute;left:2116px;top:548.00px;height:40px;line-height:40px;font-size:13px;color:#f00;font-weight:normal;letter-spacing:0px;white-space:nowrap;">涨</div>
<div style="position:absolute;left:2190px;top:548.00px;height:40px;line-height:40px;font-size:14px;color:#414750;font-weight:normal;letter-spacing:0.55px;white-space:nowrap;">2024-05-21 19:05:20</div>
<div style="position:absolute;left:315px;top:610.8px;width:2181px;height:61px;background:#fff;border-radius:5px;box-shadow:0 1px 3px rgba(0,0,0,.06);"></div>
<div style="position:absolute;left:329px;top:632.8px;width:17px;height:17px;box-sizing:border-box;border:2px solid #b3bcc7;border-radius:2px;"></div>
<div style="position:absolute;left:387px;top:620.40px;height:40px;line-height:40px;font-size:14px;color:#414750;font-weight:normal;letter-spacing:0.55px;white-space:nowrap;">52</div>
<div style="position:absolute;left:497px;top:620.40px;height:40px;line-height:40px;font-size:14px;color:#414750;font-weight:normal;letter-spacing:0.55px;white-space:nowrap;">881242</div>
<div style="position:absolute;left:711px;top:620.40px;height:40px;line-height:40px;font-size:14px;color:#414750;font-weight:normal;letter-spacing:0.3px;white-space:nowrap;">ETH/USDT-1M</div>
<div style="position:absolute;left:866px;top:620.40px;height:40px;line-height:40px;font-size:14px;color:#414750;font-weight:normal;letter-spacing:0.55px;white-space:nowrap;">100</div>
<div style="position:absolute;left:957px;top:620.40px;height:40px;line-height:40px;font-size:14px;color:#414750;font-weight:normal;letter-spacing:0.3px;white-space:nowrap;">USDT</div>
<div style="position:absolute;left:1049px;top:620.40px;height:40px;line-height:40px;font-size:14px;color:#414750;font-weight:normal;letter-spacing:0.55px;white-space:nowrap;">1.5</div>
<div style="position:absolute;left:1192px;top:620.40px;height:40px;line-height:40px;font-size:14px;color:#414750;font-weight:normal;letter-spacing:0.55px;white-space:nowrap;">0</div>
<div style="position:absolute;left:1302px;top:620.40px;height:40px;line-height:40px;font-size:13px;color:#f00;font-weight:normal;letter-spacing:0px;white-space:nowrap;">涨</div>
<div style="position:absolute;left:1376px;top:636.3px;width:10px;height:10px;background:#5c6bc6;border-radius:50%;"></div>
<div style="position:absolute;left:1394px;top:620.40px;height:40px;line-height:40px;font-size:14px;color:#414750;font-weight:normal;letter-spacing:0px;white-space:nowrap;">待交割</div>
<div style="position:absolute;left:1483px;top:620.40px;height:40px;line-height:40px;font-size:14px;color:#414750;font-weight:normal;letter-spacing:0.3px;white-space:nowrap;">2 USDT</div>
<div style="position:absolute;left:2190px;top:620.40px;height:40px;line-height:40px;font-size:14px;color:#414750;font-weight:normal;letter-spacing:0.55px;white-space:nowrap;">2024-01-18 19:36:20</div>
<div style="position:absolute;left:2410px;top:626.8px;width:52px;height:30px;box-sizing:border-box;border:1px solid #5c6bc6;border-radius:3px;background:#fff;"></div>
<div style="position:absolute;left:2424px;top:621.30px;height:40px;line-height:40px;font-size:12px;color:#5c6bc6;font-weight:normal;letter-spacing:0px;white-space:nowrap;">控制</div>
<div style="position:absolute;left:315px;top:683.2px;width:2181px;height:61px;background:#fff;border-radius:5px;box-shadow:0 1px 3px rgba(0,0,0,.06);"></div>
<div style="position:absolute;left:329px;top:705.2px;width:17px;height:17px;box-sizing:border-box;border:2px solid #b3bcc7;border-radius:2px;"></div>
<div style="position:absolute;left:387px;top:692.80px;height:40px;line-height:40px;font-size:14px;color:#414750;font-weight:normal;letter-spacing:0.55px;white-space:nowrap;">50</div>
<div style="position:absolute;left:497px;top:692.80px;height:40px;line-height:40px;font-size:14px;color:#414750;font-weight:normal;letter-spacing:0.55px;white-space:nowrap;">881229</div>
<div style="position:absolute;left:711px;top:692.80px;height:40px;line-height:40px;font-size:14px;color:#414750;font-weight:normal;letter-spacing:0.3px;white-space:nowrap;">ETH/USDT-1M</div>
<div style="position:absolute;left:866px;top:692.80px;height:40px;line-height:40px;font-size:14px;color:#414750;font-weight:normal;letter-spacing:0.55px;white-space:nowrap;">100</div>
<div style="position:absolute;left:957px;top:692.80px;height:40px;line-height:40px;font-size:14px;color:#414750;font-weight:normal;letter-spacing:0.3px;white-space:nowrap;">USDT</div>
<div style="position:absolute;left:1049px;top:692.80px;height:40px;line-height:40px;font-size:14px;color:#414750;font-weight:normal;letter-spacing:0.55px;white-space:nowrap;">1.5</div>
<div style="position:absolute;left:1192px;top:692.80px;height:40px;line-height:40px;font-size:14px;color:#414750;font-weight:normal;letter-spacing:0.55px;white-space:nowrap;">0</div>
<div style="position:absolute;left:1302px;top:692.80px;height:40px;line-height:40px;font-size:13px;color:#008000;font-weight:normal;letter-spacing:0px;white-space:nowrap;">跌</div>
<div style="position:absolute;left:1376px;top:708.7px;width:10px;height:10px;background:#5c6bc6;border-radius:50%;"></div>
<div style="position:absolute;left:1394px;top:692.80px;height:40px;line-height:40px;font-size:14px;color:#414750;font-weight:normal;letter-spacing:0px;white-space:nowrap;">待交割</div>
<div style="position:absolute;left:1483px;top:692.80px;height:40px;line-height:40px;font-size:14px;color:#414750;font-weight:normal;letter-spacing:0.3px;white-space:nowrap;">2 USDT</div>
<div style="position:absolute;left:2007px;top:692.80px;height:40px;line-height:40px;font-size:14px;color:#414750;font-weight:normal;letter-spacing:0.55px;white-space:nowrap;">1</div>
<div style="position:absolute;left:2116px;top:692.80px;height:40px;line-height:40px;font-size:13px;color:#f00;font-weight:normal;letter-spacing:0px;white-space:nowrap;">涨</div>
<div style="position:absolute;left:2190px;top:692.80px;height:40px;line-height:40px;font-size:14px;color:#414750;font-weight:normal;letter-spacing:0.55px;white-space:nowrap;">2024-01-17 15:28:22</div>
<div style="position:absolute;left:2410px;top:699.2px;width:52px;height:30px;box-sizing:border-box;border:1px solid #5c6bc6;border-radius:3px;background:#fff;"></div>
<div style="position:absolute;left:2424px;top:693.70px;height:40px;line-height:40px;font-size:12px;color:#5c6bc6;font-weight:normal;letter-spacing:0px;white-space:nowrap;">控制</div>
<div style="position:absolute;left:315px;top:755.6px;width:2181px;height:61px;background:#fff;border-radius:5px;box-shadow:0 1px 3px rgba(0,0,0,.06);"></div>
<div style="position:absolute;left:329px;top:777.6px;width:17px;height:17px;box-sizing:border-box;border:2px solid #b3bcc7;border-radius:2px;"></div>
<div style="position:absolute;left:387px;top:765.20px;height:40px;line-height:40px;font-size:14px;color:#414750;font-weight:normal;letter-spacing:0.55px;white-space:nowrap;">49</div>
<div style="position:absolute;left:497px;top:765.20px;height:40px;line-height:40px;font-size:14px;color:#414750;font-weight:normal;letter-spacing:0.55px;white-space:nowrap;">881001</div>
<div style="position:absolute;left:711px;top:765.20px;height:40px;line-height:40px;font-size:14px;color:#414750;font-weight:normal;letter-spacing:0.3px;white-space:nowrap;">BTC/USDT-1M</div>
<div style="position:absolute;left:866px;top:765.20px;height:40px;line-height:40px;font-size:14px;color:#414750;font-weight:normal;letter-spacing:0.55px;white-space:nowrap;">100</div>
<div style="position:absolute;left:957px;top:765.20px;height:40px;line-height:40px;font-size:14px;color:#414750;font-weight:normal;letter-spacing:0.3px;white-space:nowrap;">USDT</div>
<div style="position:absolute;left:1049px;top:765.20px;height:40px;line-height:40px;font-size:14px;color:#414750;font-weight:normal;letter-spacing:0.55px;white-space:nowrap;">1.5</div>
<div style="position:absolute;left:1192px;top:765.20px;height:40px;line-height:40px;font-size:14px;color:#414750;font-weight:normal;letter-spacing:0.55px;white-space:nowrap;">0</div>
<div style="position:absolute;left:1302px;top:765.20px;height:40px;line-height:40px;font-size:13px;color:#f00;font-weight:normal;letter-spacing:0px;white-space:nowrap;">涨</div>
<div style="position:absolute;left:1376px;top:781.1px;width:10px;height:10px;background:#5c6bc6;border-radius:50%;"></div>
<div style="position:absolute;left:1394px;top:765.20px;height:40px;line-height:40px;font-size:14px;color:#414750;font-weight:normal;letter-spacing:0px;white-space:nowrap;">待交割</div>
<div style="position:absolute;left:1483px;top:765.20px;height:40px;line-height:40px;font-size:14px;color:#414750;font-weight:normal;letter-spacing:0.3px;white-space:nowrap;">2 USDT</div>
<div style="position:absolute;left:2190px;top:765.20px;height:40px;line-height:40px;font-size:14px;color:#414750;font-weight:normal;letter-spacing:0.55px;white-space:nowrap;">2023-12-28 16:35:27</div>
<div style="position:absolute;left:2410px;top:771.6px;width:52px;height:30px;box-sizing:border-box;border:1px solid #5c6bc6;border-radius:3px;background:#fff;"></div>
<div style="position:absolute;left:2424px;top:766.10px;height:40px;line-height:40px;font-size:12px;color:#5c6bc6;font-weight:normal;letter-spacing:0px;white-space:nowrap;">控制</div>
<div style="position:absolute;left:315px;top:828.0px;width:2181px;height:61px;background:#fff;border-radius:5px;box-shadow:0 1px 3px rgba(0,0,0,.06);"></div>
<div style="position:absolute;left:329px;top:850.0px;width:17px;height:17px;box-sizing:border-box;border:2px solid #b3bcc7;border-radius:2px;"></div>
<div style="position:absolute;left:387px;top:837.60px;height:40px;line-height:40px;font-size:14px;color:#414750;font-weight:normal;letter-spacing:0.55px;white-space:nowrap;">47</div>
<div style="position:absolute;left:497px;top:837.60px;height:40px;line-height:40px;font-size:14px;color:#414750;font-weight:normal;letter-spacing:0.55px;white-space:nowrap;">881215</div>
<div style="position:absolute;left:711px;top:837.60px;height:40px;line-height:40px;font-size:14px;color:#414750;font-weight:normal;letter-spacing:0.3px;white-space:nowrap;">BTC/USDT-1M</div>
<div style="position:absolute;left:866px;top:837.60px;height:40px;line-height:40px;font-size:14px;color:#414750;font-weight:normal;letter-spacing:0.55px;white-space:nowrap;">200</div>
<div style="position:absolute;left:957px;top:837.60px;height:40px;line-height:40px;font-size:14px;color:#414750;font-weight:normal;letter-spacing:0.3px;white-space:nowrap;">USDT</div>
<div style="position:absolute;left:1049px;top:837.60px;height:40px;line-height:40px;font-size:14px;color:#414750;font-weight:normal;letter-spacing:0.55px;white-space:nowrap;">1.5</div>
<div style="position:absolute;left:1192px;top:837.60px;height:40px;line-height:40px;font-size:14px;color:#414750;font-weight:normal;letter-spacing:0.55px;white-space:nowrap;">0</div>
<div style="position:absolute;left:1302px;top:837.60px;height:40px;line-height:40px;font-size:13px;color:#f00;font-weight:normal;letter-spacing:0px;white-space:nowrap;">涨</div>
<div style="position:absolute;left:1376px;top:853.5px;width:10px;height:10px;background:#5c6bc6;border-radius:50%;"></div>
<div style="position:absolute;left:1394px;top:837.60px;height:40px;line-height:40px;font-size:14px;color:#414750;font-weight:normal;letter-spacing:0px;white-space:nowrap;">待交割</div>
<div style="position:absolute;left:1483px;top:837.60px;height:40px;line-height:40px;font-size:14px;color:#414750;font-weight:normal;letter-spacing:0.3px;white-space:nowrap;">4 USDT</div>
<div style="position:absolute;left:2190px;top:837.60px;height:40px;line-height:40px;font-size:14px;color:#414750;font-weight:normal;letter-spacing:0.55px;white-space:nowrap;">2023-11-27 15:01:04</div>
<div style="position:absolute;left:2410px;top:844.0px;width:52px;height:30px;box-sizing:border-box;border:1px solid #5c6bc6;border-radius:3px;background:#fff;"></div>
<div style="position:absolute;left:2424px;top:838.50px;height:40px;line-height:40px;font-size:12px;color:#5c6bc6;font-weight:normal;letter-spacing:0px;white-space:nowrap;">控制</div>
<div style="position:absolute;left:315px;top:900.4px;width:2181px;height:61px;background:#fff;border-radius:5px;box-shadow:0 1px 3px rgba(0,0,0,.06);"></div>
<div style="position:absolute;left:329px;top:922.4px;width:17px;height:17px;box-sizing:border-box;border:2px solid #b3bcc7;border-radius:2px;"></div>
<div style="position:absolute;left:387px;top:910.00px;height:40px;line-height:40px;font-size:14px;color:#414750;font-weight:normal;letter-spacing:0.55px;white-space:nowrap;">46</div>
<div style="position:absolute;left:497px;top:910.00px;height:40px;line-height:40px;font-size:14px;color:#414750;font-weight:normal;letter-spacing:0.55px;white-space:nowrap;">881214</div>
<div style="position:absolute;left:711px;top:910.00px;height:40px;line-height:40px;font-size:14px;color:#414750;font-weight:normal;letter-spacing:0.3px;white-space:nowrap;">BTC/USDT-1M</div>
<div style="position:absolute;left:866px;top:910.00px;height:40px;line-height:40px;font-size:14px;color:#414750;font-weight:normal;letter-spacing:0.55px;white-space:nowrap;">100</div>
<div style="position:absolute;left:957px;top:910.00px;height:40px;line-height:40px;font-size:14px;color:#414750;font-weight:normal;letter-spacing:0.3px;white-space:nowrap;">USDT</div>
<div style="position:absolute;left:1049px;top:910.00px;height:40px;line-height:40px;font-size:14px;color:#414750;font-weight:normal;letter-spacing:0.55px;white-space:nowrap;">1.5</div>
<div style="position:absolute;left:1192px;top:910.00px;height:40px;line-height:40px;font-size:14px;color:#414750;font-weight:normal;letter-spacing:0.55px;white-space:nowrap;">0</div>
<div style="position:absolute;left:1302px;top:910.00px;height:40px;line-height:40px;font-size:13px;color:#f00;font-weight:normal;letter-spacing:0px;white-space:nowrap;">涨</div>
<div style="position:absolute;left:1376px;top:925.9px;width:10px;height:10px;background:#5c6bc6;border-radius:50%;"></div>
<div style="position:absolute;left:1394px;top:910.00px;height:40px;line-height:40px;font-size:14px;color:#414750;font-weight:normal;letter-spacing:0px;white-space:nowrap;">待交割</div>
<div style="position:absolute;left:1483px;top:910.00px;height:40px;line-height:40px;font-size:14px;color:#414750;font-weight:normal;letter-spacing:0.3px;white-space:nowrap;">2 USDT</div>
<div style="position:absolute;left:2190px;top:910.00px;height:40px;line-height:40px;font-size:14px;color:#414750;font-weight:normal;letter-spacing:0.55px;white-space:nowrap;">2023-11-27 14:44:15</div>
<div style="position:absolute;left:2410px;top:916.4px;width:52px;height:30px;box-sizing:border-box;border:1px solid #5c6bc6;border-radius:3px;background:#fff;"></div>
<div style="position:absolute;left:2424px;top:910.90px;height:40px;line-height:40px;font-size:12px;color:#5c6bc6;font-weight:normal;letter-spacing:0px;white-space:nowrap;">控制</div>
<div style="position:absolute;left:315px;top:972.8px;width:2181px;height:61px;background:#fff;border-radius:5px;box-shadow:0 1px 3px rgba(0,0,0,.06);"></div>
<div style="position:absolute;left:329px;top:994.8px;width:17px;height:17px;box-sizing:border-box;border:2px solid #b3bcc7;border-radius:2px;"></div>
<div style="position:absolute;left:387px;top:982.40px;height:40px;line-height:40px;font-size:14px;color:#414750;font-weight:normal;letter-spacing:0.55px;white-space:nowrap;">45</div>
<div style="position:absolute;left:497px;top:982.40px;height:40px;line-height:40px;font-size:14px;color:#414750;font-weight:normal;letter-spacing:0.55px;white-space:nowrap;">881194</div>
<div style="position:absolute;left:590px;top:982.40px;height:40px;line-height:40px;font-size:14px;color:#414750;font-weight:normal;letter-spacing:0px;white-space:nowrap;">华昇组丧彪</div>
<div style="position:absolute;left:711px;top:982.40px;height:40px;line-height:40px;font-size:14px;color:#414750;font-weight:normal;letter-spacing:0.3px;white-space:nowrap;">BTC/USDT-1M</div>
<div style="position:absolute;left:866px;top:982.40px;height:40px;line-height:40px;font-size:14px;color:#414750;font-weight:normal;letter-spacing:0.55px;white-space:nowrap;">100</div>
<div style="position:absolute;left:957px;top:982.40px;height:40px;line-height:40px;font-size:14px;color:#414750;font-weight:normal;letter-spacing:0.3px;white-space:nowrap;">USDT</div>
<div style="position:absolute;left:1049px;top:982.40px;height:40px;line-height:40px;font-size:14px;color:#414750;font-weight:normal;letter-spacing:0.55px;white-space:nowrap;">1.5</div>
<div style="position:absolute;left:1192px;top:982.40px;height:40px;line-height:40px;font-size:14px;color:#414750;font-weight:normal;letter-spacing:0.55px;white-space:nowrap;">0</div>
<div style="position:absolute;left:1302px;top:982.40px;height:40px;line-height:40px;font-size:13px;color:#f00;font-weight:normal;letter-spacing:0px;white-space:nowrap;">涨</div>
<div style="position:absolute;left:1376px;top:998.3px;width:10px;height:10px;background:#b9c3cd;border-radius:50%;"></div>
<div style="position:absolute;left:1394px;top:982.40px;height:40px;line-height:40px;font-size:14px;color:#414750;font-weight:normal;letter-spacing:0px;white-space:nowrap;">流局</div>
<div style="position:absolute;left:1483px;top:982.40px;height:40px;line-height:40px;font-size:14px;color:#414750;font-weight:normal;letter-spacing:0.3px;white-space:nowrap;">2 USDT</div>
<div style="position:absolute;left:2190px;top:982.40px;height:40px;line-height:40px;font-size:14px;color:#414750;font-weight:normal;letter-spacing:0.55px;white-space:nowrap;">2023-11-25 22:01:33</div>
<div style="position:absolute;left:2410px;top:988.8px;width:52px;height:30px;box-sizing:border-box;border:1px solid #5c6bc6;border-radius:3px;background:#fff;"></div>
<div style="position:absolute;left:2424px;top:983.30px;height:40px;line-height:40px;font-size:12px;color:#5c6bc6;font-weight:normal;letter-spacing:0px;white-space:nowrap;">控制</div>
<div style="position:absolute;left:315px;top:1045.2px;width:2181px;height:61px;background:#fff;border-radius:5px;box-shadow:0 1px 3px rgba(0,0,0,.06);"></div>
<div style="position:absolute;left:329px;top:1067.2px;width:17px;height:17px;box-sizing:border-box;border:2px solid #b3bcc7;border-radius:2px;"></div>
<div style="position:absolute;left:387px;top:1054.80px;height:40px;line-height:40px;font-size:14px;color:#414750;font-weight:normal;letter-spacing:0.55px;white-space:nowrap;">44</div>
<div style="position:absolute;left:497px;top:1054.80px;height:40px;line-height:40px;font-size:14px;color:#414750;font-weight:normal;letter-spacing:0.55px;white-space:nowrap;">881194</div>
<div style="position:absolute;left:590px;top:1054.80px;height:40px;line-height:40px;font-size:14px;color:#414750;font-weight:normal;letter-spacing:0px;white-space:nowrap;">华昇组丧彪</div>
<div style="position:absolute;left:711px;top:1054.80px;height:40px;line-height:40px;font-size:14px;color:#414750;font-weight:normal;letter-spacing:0.3px;white-space:nowrap;">BTC/USDT-1M</div>
<div style="position:absolute;left:866px;top:1054.80px;height:40px;line-height:40px;font-size:14px;color:#414750;font-weight:normal;letter-spacing:0.55px;white-space:nowrap;">100</div>
<div style="position:absolute;left:957px;top:1054.80px;height:40px;line-height:40px;font-size:14px;color:#414750;font-weight:normal;letter-spacing:0.3px;white-space:nowrap;">USDT</div>
<div style="position:absolute;left:1049px;top:1054.80px;height:40px;line-height:40px;font-size:14px;color:#414750;font-weight:normal;letter-spacing:0.55px;white-space:nowrap;">1.5</div>
<div style="position:absolute;left:1192px;top:1054.80px;height:40px;line-height:40px;font-size:14px;color:#414750;font-weight:normal;letter-spacing:0.55px;white-space:nowrap;">0</div>
<div style="position:absolute;left:1302px;top:1054.80px;height:40px;line-height:40px;font-size:13px;color:#f00;font-weight:normal;letter-spacing:0px;white-space:nowrap;">涨</div>
<div style="position:absolute;left:1376px;top:1070.7px;width:10px;height:10px;background:#b9c3cd;border-radius:50%;"></div>
<div style="position:absolute;left:1394px;top:1054.80px;height:40px;line-height:40px;font-size:14px;color:#414750;font-weight:normal;letter-spacing:0px;white-space:nowrap;">流局</div>
<div style="position:absolute;left:1483px;top:1054.80px;height:40px;line-height:40px;font-size:14px;color:#414750;font-weight:normal;letter-spacing:0.3px;white-space:nowrap;">2 USDT</div>
<div style="position:absolute;left:2190px;top:1054.80px;height:40px;line-height:40px;font-size:14px;color:#414750;font-weight:normal;letter-spacing:0.55px;white-space:nowrap;">2023-11-20 06:42:18</div>
<div style="position:absolute;left:2410px;top:1061.2px;width:52px;height:30px;box-sizing:border-box;border:1px solid #5c6bc6;border-radius:3px;background:#fff;"></div>
<div style="position:absolute;left:2424px;top:1055.70px;height:40px;line-height:40px;font-size:12px;color:#5c6bc6;font-weight:normal;letter-spacing:0px;white-space:nowrap;">控制</div>
<div style="position:absolute;left:315px;top:1117.6px;width:2181px;height:61px;background:#fff;border-radius:5px;box-shadow:0 1px 3px rgba(0,0,0,.06);"></div>
<div style="position:absolute;left:329px;top:1139.6px;width:17px;height:17px;box-sizing:border-box;border:2px solid #b3bcc7;border-radius:2px;"></div>
<div style="position:absolute;left:387px;top:1127.20px;height:40px;line-height:40px;font-size:14px;color:#414750;font-weight:normal;letter-spacing:0.55px;white-space:nowrap;">43</div>
<div style="position:absolute;left:497px;top:1127.20px;height:40px;line-height:40px;font-size:14px;color:#414750;font-weight:normal;letter-spacing:0.55px;white-space:nowrap;">881194</div>
<div style="position:absolute;left:590px;top:1127.20px;height:40px;line-height:40px;font-size:14px;color:#414750;font-weight:normal;letter-spacing:0px;white-space:nowrap;">华昇组丧彪</div>
<div style="position:absolute;left:711px;top:1127.20px;height:40px;line-height:40px;font-size:14px;color:#414750;font-weight:normal;letter-spacing:0.3px;white-space:nowrap;">BTC/USDT-1M</div>
<div style="position:absolute;left:866px;top:1127.20px;height:40px;line-height:40px;font-size:14px;color:#414750;font-weight:normal;letter-spacing:0.55px;white-space:nowrap;">100</div>
<div style="position:absolute;left:957px;top:1127.20px;height:40px;line-height:40px;font-size:14px;color:#414750;font-weight:normal;letter-spacing:0.3px;white-space:nowrap;">USDT</div>
<div style="position:absolute;left:1049px;top:1127.20px;height:40px;line-height:40px;font-size:14px;color:#414750;font-weight:normal;letter-spacing:0.55px;white-space:nowrap;">1.5</div>
<div style="position:absolute;left:1192px;top:1127.20px;height:40px;line-height:40px;font-size:14px;color:#414750;font-weight:normal;letter-spacing:0.55px;white-space:nowrap;">0</div>
<div style="position:absolute;left:1302px;top:1127.20px;height:40px;line-height:40px;font-size:13px;color:#008000;font-weight:normal;letter-spacing:0px;white-space:nowrap;">跌</div>
<div style="position:absolute;left:1376px;top:1143.1px;width:10px;height:10px;background:#b9c3cd;border-radius:50%;"></div>
<div style="position:absolute;left:1394px;top:1127.20px;height:40px;line-height:40px;font-size:14px;color:#414750;font-weight:normal;letter-spacing:0px;white-space:nowrap;">流局</div>
<div style="position:absolute;left:1483px;top:1127.20px;height:40px;line-height:40px;font-size:14px;color:#414750;font-weight:normal;letter-spacing:0.3px;white-space:nowrap;">2 USDT</div>
<div style="position:absolute;left:2190px;top:1127.20px;height:40px;line-height:40px;font-size:14px;color:#414750;font-weight:normal;letter-spacing:0.55px;white-space:nowrap;">2023-11-20 01:17:10</div>
<div style="position:absolute;left:2410px;top:1133.6px;width:52px;height:30px;box-sizing:border-box;border:1px solid #5c6bc6;border-radius:3px;background:#fff;"></div>
<div style="position:absolute;left:2424px;top:1128.10px;height:40px;line-height:40px;font-size:12px;color:#5c6bc6;font-weight:normal;letter-spacing:0px;white-space:nowrap;">控制</div>
<div style="position:absolute;left:315px;top:1190.0px;width:2181px;height:61px;background:#fff;border-radius:5px;box-shadow:0 1px 3px rgba(0,0,0,.06);"></div>
<div style="position:absolute;left:329px;top:1212.0px;width:17px;height:17px;box-sizing:border-box;border:2px solid #b3bcc7;border-radius:2px;"></div>
<div style="position:absolute;left:387px;top:1199.60px;height:40px;line-height:40px;font-size:14px;color:#414750;font-weight:normal;letter-spacing:0.55px;white-space:nowrap;">42</div>
<div style="position:absolute;left:497px;top:1199.60px;height:40px;line-height:40px;font-size:14px;color:#414750;font-weight:normal;letter-spacing:0.55px;white-space:nowrap;">881207</div>
<div style="position:absolute;left:711px;top:1199.60px;height:40px;line-height:40px;font-size:14px;color:#414750;font-weight:normal;letter-spacing:0.3px;white-space:nowrap;">BTC/USDT-1M</div>
<div style="position:absolute;left:866px;top:1199.60px;height:40px;line-height:40px;font-size:14px;color:#414750;font-weight:normal;letter-spacing:0.55px;white-space:nowrap;">100</div>
<div style="position:absolute;left:957px;top:1199.60px;height:40px;line-height:40px;font-size:14px;color:#414750;font-weight:normal;letter-spacing:0.3px;white-space:nowrap;">USDT</div>
<div style="position:absolute;left:1049px;top:1199.60px;height:40px;line-height:40px;font-size:14px;color:#414750;font-weight:normal;letter-spacing:0.55px;white-space:nowrap;">1.5</div>
<div style="position:absolute;left:1192px;top:1199.60px;height:40px;line-height:40px;font-size:14px;color:#414750;font-weight:normal;letter-spacing:0.55px;white-space:nowrap;">0</div>
<div style="position:absolute;left:1302px;top:1199.60px;height:40px;line-height:40px;font-size:13px;color:#f00;font-weight:normal;letter-spacing:0px;white-space:nowrap;">涨</div>
<div style="position:absolute;left:1376px;top:1215.5px;width:10px;height:10px;background:#b9c3cd;border-radius:50%;"></div>
<div style="position:absolute;left:1394px;top:1199.60px;height:40px;line-height:40px;font-size:14px;color:#414750;font-weight:normal;letter-spacing:0px;white-space:nowrap;">流局</div>
<div style="position:absolute;left:1483px;top:1199.60px;height:40px;line-height:40px;font-size:14px;color:#414750;font-weight:normal;letter-spacing:0.3px;white-space:nowrap;">2 USDT</div>
<div style="position:absolute;left:2007px;top:1199.60px;height:40px;line-height:40px;font-size:14px;color:#414750;font-weight:normal;letter-spacing:0.55px;white-space:nowrap;">27427.16</div>
<div style="position:absolute;left:2116px;top:1199.60px;height:40px;line-height:40px;font-size:13px;color:#f00;font-weight:normal;letter-spacing:0px;white-space:nowrap;">涨</div>
<div style="position:absolute;left:2190px;top:1199.60px;height:40px;line-height:40px;font-size:14px;color:#414750;font-weight:normal;letter-spacing:0.55px;white-space:nowrap;">2023-11-20 00:19:32</div>
<div style="position:absolute;left:2410px;top:1206.0px;width:52px;height:30px;box-sizing:border-box;border:1px solid #5c6bc6;border-radius:3px;background:#fff;"></div>
<div style="position:absolute;left:2424px;top:1200.50px;height:40px;line-height:40px;font-size:12px;color:#5c6bc6;font-weight:normal;letter-spacing:0px;white-space:nowrap;">控制</div>
</body></html>
